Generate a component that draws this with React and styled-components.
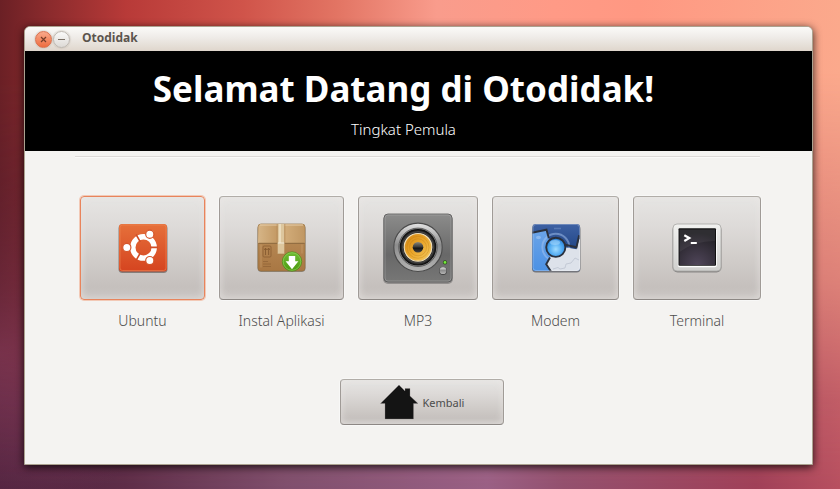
import styled, { createGlobalStyle } from 'styled-components';

const GlobalStyle = createGlobalStyle`
  * {
    box-sizing: border-box;
  }

  body {
    margin: 0;
    font-family: 'Noto Sans', sans-serif;
    color: #4c4c4c;
  }
`;

const Desktop = styled.div`
  position: relative;
  display: flex;
  min-height: 100vh;
  padding: 26px 27px 24px 24px;
  background:
    radial-gradient(ellipse 20% 35% at 0% 72%, #7d3a5c, transparent),
    linear-gradient(90deg, #4b213c 0%, #5e2e49 15%, #7f4f6d 34%, #9a6085 58%, #93506e 67%, #a04058 90%, #b85060 100%);

  &::before {
    content: '';
    position: absolute;
    inset: 0;
    background: linear-gradient(90deg, #6b2025 0%, #8c2b2d 6%, #b83a38 15%, #d0544a 29%, #e27463 40%, #f99c8c 52%, #ff9a86 66%, #ff9882 76%, #fba98c 100%);
    mask-image: linear-gradient(180deg, #000 0%, #000 15%, rgba(0, 0, 0, 0.55) 58%, rgba(0, 0, 0, 0.15) 82%, transparent 100%);
  }
`;

const Window = styled.main`
  position: relative;
  display: flex;
  flex: 1;
  flex-direction: column;
  overflow: hidden;
  border: 1px solid #aba290;
  border-radius: 6px 6px 0 0;
  background: #f4f3f1;
  box-shadow: 0 2px 8px rgba(0, 0, 0, 0.8);
`;

const TitleBar = styled.div`
  display: flex;
  align-items: center;
  height: 24px;
  padding-left: 10px;
  background: linear-gradient(180deg, #fbfaf8 0%, #eeebe7 45%, #dfd6cc 100%);
`;

const WindowButton = styled.button`
  display: flex;
  align-items: center;
  justify-content: center;
  width: 17px;
  height: 17px;
  margin-right: 1px;
  padding: 0;
  border: 1px solid ${(props) => (props.$close ? '#d8714e' : '#bdb8b1')};
  border-radius: 50%;
  background: ${(props) =>
    props.$close
      ? 'linear-gradient(180deg, #f9a98b, #ee6c3e)'
      : 'linear-gradient(180deg, #fafaf9, #dddad6)'};
  box-shadow: 0 0 1px 1px rgba(190, 180, 170, 0.35);
`;

const WindowTitle = styled.span`
  padding: 0 0 2px 11px;
  font-family: 'Open Sans', sans-serif;
  font-size: 12px;
  font-weight: 700;
  line-height: 16px;
  color: #5b544d;
`;

const Header = styled.header`
  height: 100px;
  padding: 12px 30px 0 0;
  background: #000;
  color: #fff;
  text-align: center;
`;

const Heading = styled.h1`
  margin: 0;
  font-size: 35px;
  font-weight: 700;
  line-height: 52px;
`;

const Level = styled.p`
  margin: 4px 0 0;
  font-size: 15px;
  font-weight: 300;
  line-height: 20px;
`;

const Divider = styled.hr`
  height: 2px;
  margin: 5px 52px 0 50px;
  border: 0;
  border-top: 1px solid #dddad8;
  background: #fbfbfa;
`;

const Lessons = styled.div`
  display: grid;
  grid-template-columns: 125fr 125fr 120fr 127fr 128fr;
  gap: 14px;
  margin: 38px 51px 0 55px;
`;

const Lesson = styled.div`
  display: flex;
  flex-direction: column;
  align-items: center;
`;

const RaisedButton = styled.button`
  display: flex;
  align-items: center;
  justify-content: center;
  padding: 0;
  border: 1px solid;
  border-color: ${(props) => (props.$active ? '#e8845c' : '#b1ada8 #a09b97 #8c8784')};
  border-radius: 4px;
  background: linear-gradient(180deg, #e6e5e3 0%, #dddad8 30%, #d1cdca 60%, #c5c0bd 88%, #cac6c3 100%);
  box-shadow:
    0 0 0 1px ${(props) => (props.$active ? 'rgba(240, 150, 110, 0.45)' : '#f8f8f7')},
    inset 0 0 7px 1px rgba(235, 232, 230, 0.6);
`;

const LessonButton = styled(RaisedButton)`
  width: 100%;
  height: 104px;
`;

const LessonLabel = styled.label`
  margin-top: 11px;
  font-size: 14px;
  font-weight: 300;
  line-height: 20px;
`;

const Footer = styled.footer`
  display: flex;
  justify-content: center;
  padding: 48px 0 39px 7px;
`;

const BackButton = styled(RaisedButton)`
  gap: 5px;
  width: 164px;
  height: 46px;
  font-family: inherit;
  font-size: 11px;
  color: #4c4c4c;
`;

const UbuntuIcon = () => (
  <svg width="50" height="50" viewBox="0 0 50 50" aria-hidden="true">
    <defs>
      <linearGradient id="ubuntuFill" x1="0" y1="0" x2="0" y2="1">
        <stop offset="0" stopColor="#e6703a" />
        <stop offset="1" stopColor="#d54420" />
      </linearGradient>
    </defs>
    <rect x="0.5" y="1.5" width="49" height="48.5" rx="4" fill="#554c49" opacity="0.6" />
    <rect x="1" y="1" width="48" height="47.5" rx="3" fill="url(#ubuntuFill)" />
    <rect x="2" y="2" width="46" height="45.5" rx="2.5" fill="none" stroke="#f08b59" strokeOpacity="0.55" />
    <circle cx="25.5" cy="24.4" r="10.7" fill="none" stroke="#fff" strokeWidth="5.4" />
    <path d="M32 24.4h8M22.3 18.8l-4.2-7.3M22.3 30l-4.2 7.3" stroke="#cf4f28" strokeWidth="1.6" />
    <g fill="#fff" stroke="#d4552b" strokeWidth="1.2">
      <circle cx="8.8" cy="24.4" r="4.1" />
      <circle cx="31.8" cy="11.2" r="4.1" />
      <circle cx="31.8" cy="37.6" r="4.1" />
    </g>
  </svg>
);

const PackageIcon = () => (
  <svg width="50" height="50" viewBox="0 0 50 50" aria-hidden="true">
    <defs>
      <linearGradient id="boxTop" x1="0" y1="0" x2="1" y2="0">
        <stop offset="0" stopColor="#d6b587" />
        <stop offset="0.4" stopColor="#c49a65" />
        <stop offset="0.6" stopColor="#d1ab78" />
        <stop offset="1" stopColor="#c09763" />
      </linearGradient>
      <linearGradient id="boxFront" x1="0" y1="0" x2="0" y2="1">
        <stop offset="0" stopColor="#bc905b" />
        <stop offset="1" stopColor="#a97743" />
      </linearGradient>
      <linearGradient id="badgeFill" x1="0" y1="0" x2="0" y2="1">
        <stop offset="0" stopColor="#71bd36" />
        <stop offset="1" stopColor="#4b9a10" />
      </linearGradient>
    </defs>
    <rect x="0.5" y="2" width="48" height="47" rx="4" fill="#645d58" opacity="0.6" />
    <rect x="1" y="1" width="47" height="47" rx="3" fill="url(#boxFront)" stroke="#94703f" strokeWidth="0.7" />
    <path d="M4 1.2h41q2.5 0 2.5 3l.4 15.8H1l.4-15.8q0-3 2.6-3z" fill="url(#boxTop)" />
    <path d="M1.5 20.3h46" stroke="#8b683f" />
    <path d="M4 21.5v23M45 21.5v9" stroke="#d0a878" opacity="0.5" />
    <path d="M3 2h43" stroke="#e6cda9" />
    <path d="M20.7 1h6.6v30h-6.6z" fill="#ddc69d" />
    <path d="M22 1h2v19h-2z" fill="#f1e5ca" opacity="0.7" />
    <path d="M20.7 20h6.6" stroke="#f2ead8" />
    <path d="M20.2 1v19M27.8 1v19M20.7 31h6.6" stroke="#a77d4c" strokeWidth="0.6" />
    <rect x="6" y="23" width="8" height="11" rx="1" fill="none" stroke="#8a5e32" strokeWidth="0.8" />
    <path d="M8.5 32v-7M11.6 32v-7M7.3 27l1.2-2 1.2 2M10.4 27l1.2-2 1.2 2" stroke="#865a30" strokeWidth="0.9" fill="none" />
    <path d="M6 38.5h5M6 41h8M6 43.5h8" stroke="#865a30" strokeWidth="0.9" opacity="0.6" />
    <circle cx="35" cy="38.5" r="9.7" fill="url(#badgeFill)" stroke="#458a16" strokeWidth="0.6" />
    <circle cx="35" cy="38.5" r="8.8" fill="none" stroke="#9bdb62" strokeWidth="0.8" opacity="0.7" />
    <path d="M31.8 33h6.4v5.3h3.2L35 46.2l-6.4-7.9h3.2z" fill="#fff" />
  </svg>
);

const SpeakerIcon = () => (
  <svg width="72" height="72" viewBox="0 0 72 72" aria-hidden="true">
    <defs>
      <linearGradient id="caseFill" x1="0" y1="0" x2="0" y2="1">
        <stop offset="0" stopColor="#8c8c8b" />
        <stop offset="0.6" stopColor="#686868" />
        <stop offset="1" stopColor="#777776" />
      </linearGradient>
      <linearGradient id="rimFill" x1="0" y1="0" x2="0" y2="1">
        <stop offset="0" stopColor="#e4e4e4" />
        <stop offset="0.45" stopColor="#8d8d8d" />
        <stop offset="1" stopColor="#b5b5b4" />
      </linearGradient>
      <linearGradient id="coneFill" x1="0" y1="0" x2="1" y2="1">
        <stop offset="0" stopColor="#d08414" />
        <stop offset="0.45" stopColor="#e9a428" />
        <stop offset="1" stopColor="#f5cc63" />
      </linearGradient>
      <linearGradient id="domeFill" x1="0" y1="0" x2="0" y2="1">
        <stop offset="0" stopColor="#88867c" />
        <stop offset="0.5" stopColor="#353534" />
        <stop offset="0.55" stopColor="#111" />
        <stop offset="1" stopColor="#454545" />
      </linearGradient>
    </defs>
    <rect x="1" y="3" width="70" height="69" rx="5" fill="#555" opacity="0.45" />
    <rect x="2" y="2" width="68" height="68" rx="4" fill="url(#caseFill)" stroke="#555" strokeWidth="0.8" />
    <rect x="3" y="3" width="66" height="66" rx="3" fill="none" stroke="#aaa" strokeWidth="0.8" opacity="0.65" />
    <circle cx="36" cy="35.3" r="24.2" fill="url(#rimFill)" stroke="#4b4b4b" strokeWidth="1.1" />
    <circle cx="36" cy="35.3" r="19.2" fill="#999" stroke="#4a4a4a" strokeWidth="0.8" />
    <circle cx="36" cy="35.3" r="17.6" fill="#2c2c2c" stroke="#111" strokeWidth="1.4" />
    <circle cx="36" cy="35.3" r="15.6" fill="none" stroke="#555" strokeWidth="0.7" />
    <circle cx="36" cy="35.3" r="13.8" fill="url(#coneFill)" stroke="#f0dfba" strokeWidth="1.2" />
    <g fill="none" stroke="#b8750c" strokeWidth="0.6" opacity="0.5">
      <circle cx="36" cy="35.3" r="11" />
      <circle cx="36" cy="35.3" r="8.5" />
    </g>
    <circle cx="36" cy="35.3" r="5.3" fill="url(#domeFill)" />
    <circle cx="63" cy="50.4" r="2.1" fill="#294f18" />
    <circle cx="63" cy="50.4" r="1.4" fill="#76ec3c" />
    <circle cx="61" cy="59" r="4" fill="#454545" />
    <circle cx="61" cy="58.7" r="3.4" fill="url(#rimFill)" />
  </svg>
);

const ModemIcon = () => (
  <svg width="50" height="50" viewBox="0 0 50 50" aria-hidden="true">
    <defs>
      <linearGradient id="modemDark" x1="0" y1="0" x2="0" y2="1">
        <stop offset="0" stopColor="#3f62a4" />
        <stop offset="0.5" stopColor="#234889" />
      </linearGradient>
      <linearGradient id="modemLight" x1="0" y1="0" x2="0" y2="1">
        <stop offset="0" stopColor="#6ba4e8" />
        <stop offset="1" stopColor="#4a90e4" />
      </linearGradient>
      <radialGradient id="modemBall" cx="0.5" cy="0.6" r="0.6">
        <stop offset="0" stopColor="#a0dcff" />
        <stop offset="0.6" stopColor="#4aa6f0" />
        <stop offset="1" stopColor="#2779cf" />
      </radialGradient>
      <clipPath id="modemClip">
        <rect x="1.5" y="1" width="47.5" height="47" rx="3" />
      </clipPath>
    </defs>
    <rect x="1" y="2" width="48.5" height="47.5" rx="4" fill="#4e535c" opacity="0.7" />
    <g clipPath="url(#modemClip)">
      <path d="M0 0h50v50H0z" fill="url(#modemDark)" />
      <path d="M0 10l15.5-3.3 2.3 8.5 7 9-6 11-3.6 6 6 9H0z" fill="url(#modemLight)" />
      <circle cx="24.8" cy="24.3" r="13.5" fill="none" stroke="#a5c4f0" strokeWidth="2" opacity="0.5" />
      <path d="M25 24h8l12.5 2.3 2.6-10H51V50H21l-5.8-8.7 3.8-6.8z" fill="#dde2ea" />
      <path d="M22 46l5-1.500 2 1.500 5-1 1-4 5-1 4-5 4 2" fill="none" stroke="#bcc4d0" strokeWidth="0.8" />
      <ellipse cx="7.500" cy="14.500" rx="2.500" ry="1.700" fill="#a3c8f3" opacity="0.6" />
      <path d="M23 5.500h7" stroke="#7594ca" strokeWidth="1.500" opacity="0.5" />
      <path d="M0 10l15.500-3.300 2.300 8.500M33 21.500l12.500 2.800 2.600-12M19 34.500l-3.800 6.800 5.800 8.700" fill="none" stroke="#2b313d" strokeWidth="1.900" />
    </g>
    <circle cx="24.8" cy="24.3" r="9.6" fill="url(#modemBall)" stroke="#29303d" strokeWidth="1.9" />
    <ellipse cx="24" cy="19.500" rx="5" ry="2.500" fill="#b5e0fd" opacity="0.5" />
    <rect x="2" y="1.5" width="46.5" height="46" rx="3" fill="none" stroke="#fff" strokeOpacity="0.25" />
  </svg>
);

const TerminalIcon = () => (
  <svg width="50" height="50" viewBox="0 0 50 50" aria-hidden="true">
    <defs>
      <linearGradient id="frameFill" x1="0" y1="0" x2="0" y2="1">
        <stop offset="0" stopColor="#f1f1ef" />
        <stop offset="1" stopColor="#cfcfcd" />
      </linearGradient>
      <radialGradient id="screenFill" cx="0.5" cy="1" r="0.9">
        <stop offset="0" stopColor="#50465a" />
        <stop offset="1" stopColor="#232126" />
      </radialGradient>
    </defs>
    <rect x="0.5" y="2" width="49" height="47.5" rx="5" fill="#666" opacity="0.65" />
    <rect x="1" y="1" width="48" height="47" rx="4" fill="url(#frameFill)" stroke="#a7a6a3" strokeWidth="0.8" />
    <rect x="5.8" y="5.3" width="39" height="39" rx="2" fill="#fff" />
    <rect x="6.5" y="5.3" width="37.5" height="37.5" rx="1" fill="#111" />
    <rect x="7.5" y="6.5" width="35.5" height="35.5" fill="url(#screenFill)" />
    <path d="M7.5 6.5H43V18Q22 18 7.5 29z" fill="#fff" opacity="0.06" />
    <path d="M12.3 12.200l5 2.900-5 2.900M18.800 20h6" fill="none" stroke="#fff" strokeWidth="2.200" />
  </svg>
);

const HomeIcon = () => (
  <svg width="38" height="36" viewBox="0 0 38 36" aria-hidden="true">
    <path d="M19 1l6 6V4.5h5V12l8 7.5h-4.500V35H5V19.5H.5z" fill="#141414" stroke="#8c8785" strokeOpacity="0.45" strokeWidth="0.7" />
  </svg>
);

const CloseIcon = () => (
  <svg width="7" height="7" viewBox="0 0 7 7" aria-hidden="true">
    <path d="M1 1l5 5M6 1L1 6" stroke="#753d28" strokeWidth="1.2" />
  </svg>
);

const MinimizeIcon = () => (
  <svg width="7" height="7" viewBox="0 0 7 7" aria-hidden="true">
    <path d="M0 3.5h7" stroke="#7b7167" />
  </svg>
);

const lessons = [
  { id: 'ubuntu', title: 'Ubuntu', icon: <UbuntuIcon />, active: true },
  { id: 'instal', title: 'Instal Aplikasi', icon: <PackageIcon /> },
  { id: 'mp3', title: 'MP3', icon: <SpeakerIcon /> },
  { id: 'modem', title: 'Modem', icon: <ModemIcon /> },
  { id: 'terminal', title: 'Terminal', icon: <TerminalIcon /> },
];

const App = () => {
  return (
    <Desktop>
      <GlobalStyle />
      <Window>
        <TitleBar>
          <WindowButton $close aria-label="Tutup">
            <CloseIcon />
          </WindowButton>
          <WindowButton aria-label="Kecilkan">
            <MinimizeIcon />
          </WindowButton>
          <WindowTitle>Otodidak</WindowTitle>
        </TitleBar>
        <Header>
          <Heading>Selamat Datang di Otodidak!</Heading>
          <Level>Tingkat Pemula</Level>
        </Header>
        <Divider />
        <Lessons>
          {lessons.map((lesson) => (
            <Lesson key={lesson.id}>
              <LessonButton id={lesson.id} $active={lesson.active}>
                {lesson.icon}
              </LessonButton>
              <LessonLabel htmlFor={lesson.id}>{lesson.title}</LessonLabel>
            </Lesson>
          ))}
        </Lessons>
        <Footer>
          <BackButton>
            <HomeIcon />
            Kembali
          </BackButton>
        </Footer>
      </Window>
    </Desktop>
  );
};

export default App;
